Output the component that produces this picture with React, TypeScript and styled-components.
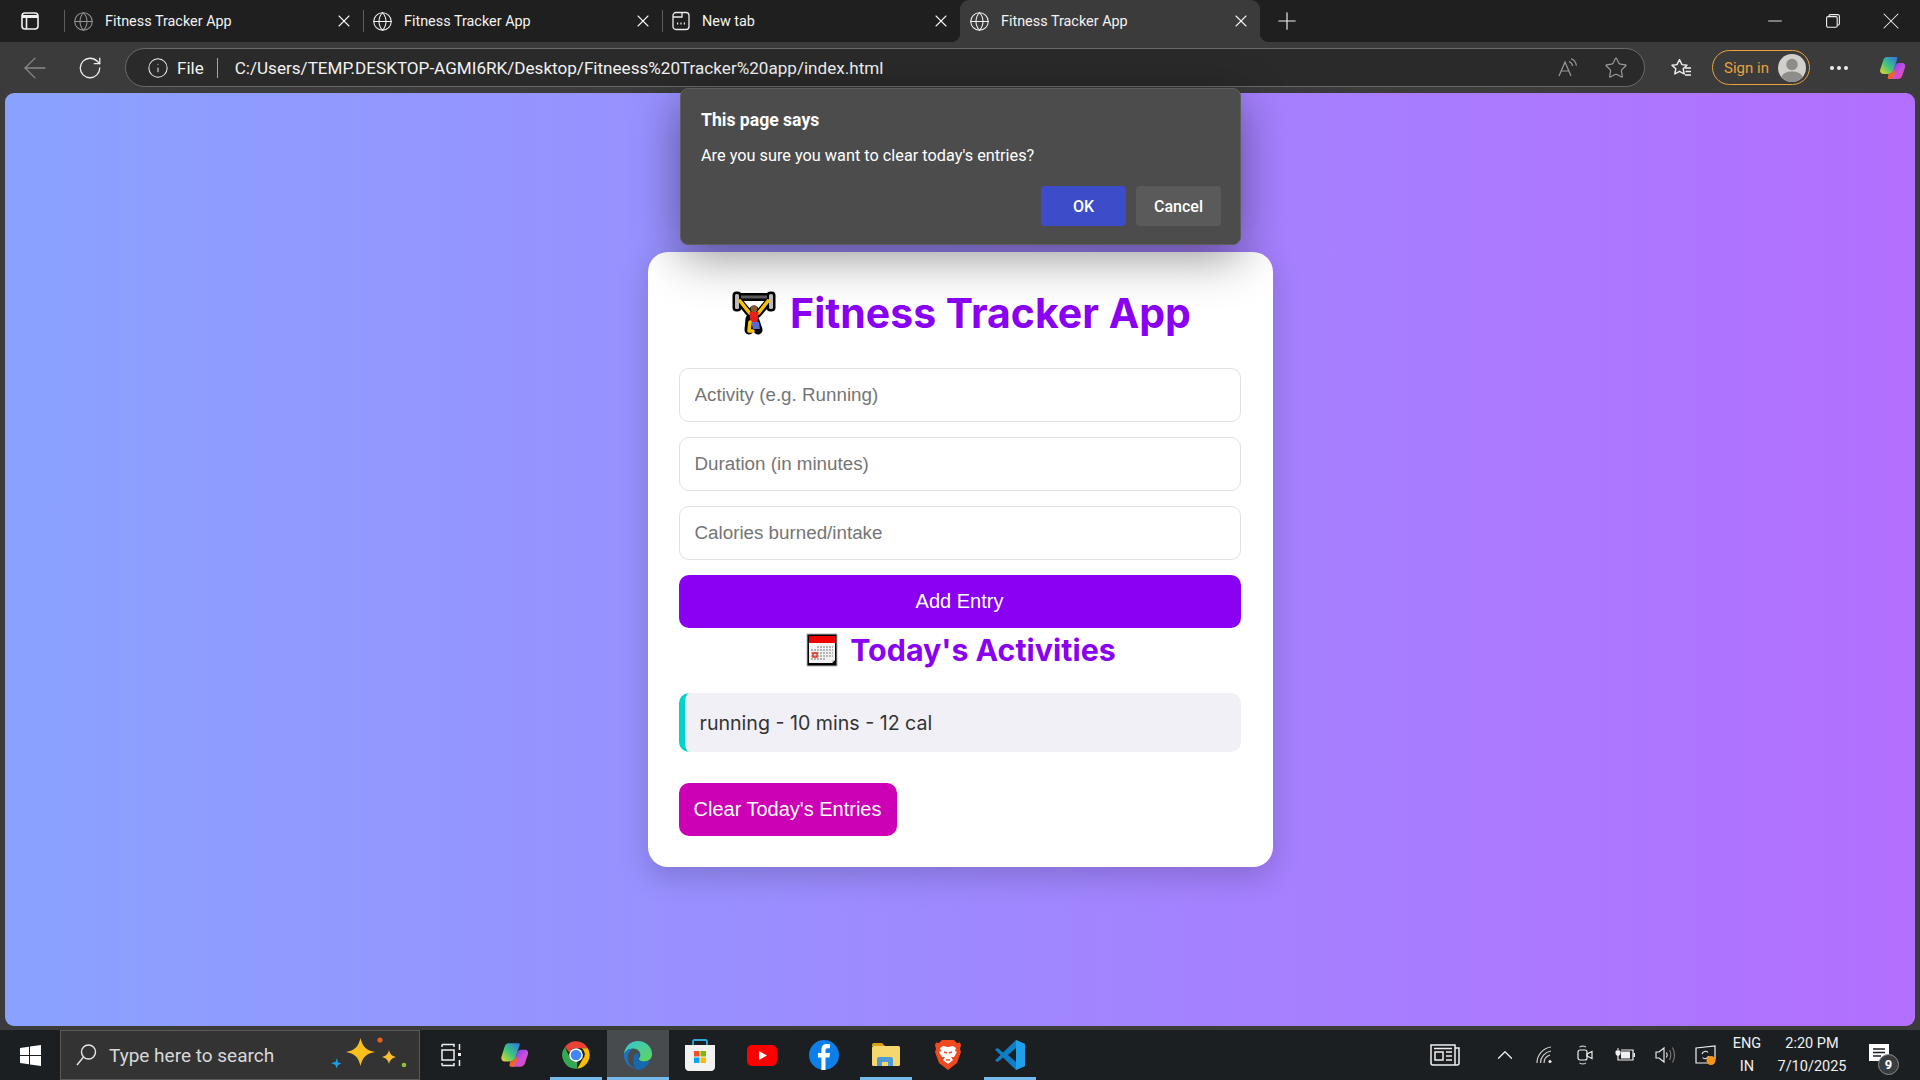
import React from 'react';
import styled, { createGlobalStyle, css } from 'styled-components';
import { ArrowLeft, ChevronUp, Globe, Info, Minus, Plus, RotateCw, Star, X } from 'lucide-react';

const GlobalStyle = createGlobalStyle`
    html, body {
        margin: 0;
        padding: 0;
        height: 100%;
        overflow: hidden;
    }
    #root {
        height: 100%;
    }
    * {
        box-sizing: border-box;
    }
`;

const uiFont = `Roboto, "Open Sans", sans-serif`;
const headingFont = `Inter, "Open Sans", sans-serif`;
const formFont = `"Liberation Sans", Arial, sans-serif`;

const Frame = styled.div`
    position: relative;
    width: 1920px;
    height: 1080px;
    display: flex;
    flex-direction: column;
    background: #3b3b3b;
    font-family: ${uiFont};
    overflow: hidden;
`;

/* tab strip */
const TabStrip = styled.div`
    height: 42px;
    display: flex;
    background: #1f1f1f;
`;

const StripLead = styled.div`
    width: 64px;
    display: flex;
    align-items: center;
    padding-left: 21px;
`;

const activeTabCorners = css`
    &::before,
    &::after {
        content: '';
        position: absolute;
        bottom: 0;
        width: 9px;
        height: 9px;
    }
    &::before {
        left: -9px;
        background: radial-gradient(circle at 0 0, transparent 9px, #3b3b3b 9.5px);
    }
    &::after {
        right: -9px;
        background: radial-gradient(circle at 100% 0, transparent 9px, #3b3b3b 9.5px);
    }
`;

const tabSeparator = css`
    &::before {
        content: '';
        position: absolute;
        left: 0;
        top: 10px;
        bottom: 10px;
        width: 1px;
        background: #5c5c5c;
    }
`;

const Tab = styled.div<{ $active?: boolean; $width?: number }>`
    position: relative;
    width: ${props => props.$width ?? 299}px;
    display: flex;
    align-items: center;
    padding: 0 9px 0 9px;
    gap: 11px;
    color: #f3f3f3;
    background: ${props => (props.$active ? '#3b3b3b' : 'transparent')};
    border-radius: ${props => (props.$active ? '9px 9px 0 0' : '0')};
    ${props => (props.$active ? activeTabCorners : tabSeparator)}
`;

const TabTitle = styled.span`
    flex: 1;
    font-size: 14.4px;
    white-space: nowrap;
`;

const FaviconSlot = styled.span<{ $dim?: boolean }>`
    display: flex;
    opacity: ${props => (props.$dim ? 0.55 : 1)};
`;

const NewTabButton = styled.div`
    width: 54px;
    display: flex;
    align-items: center;
    justify-content: center;
    color: #f0f0f0;
`;

const WindowControls = styled.div`
    margin-left: auto;
    display: flex;
    align-items: center;
    color: #f0f0f0;
`;

const WindowButton = styled.div`
    width: 58px;
    display: flex;
    justify-content: center;
`;

/* toolbar */
const Toolbar = styled.div`
    height: 51px;
    display: flex;
    align-items: center;
    padding: 0 12px 0 13px;
    background: #3b3b3b;
`;

const ToolButton = styled.div<{ $gap?: number; $dim?: boolean }>`
    width: 44px;
    margin-left: ${props => props.$gap ?? 0}px;
    display: flex;
    justify-content: center;
    color: ${props => (props.$dim ? '#8a8a8a' : '#ececec')};
`;

const AddressBar = styled.div`
    width: 1520px;
    height: 39px;
    margin-left: 13px;
    margin-right: 14px;
    padding: 0 16px 0 21px;
    display: flex;
    align-items: center;
    border: 1px solid #6a6a6a;
    border-radius: 20px;
    background: #2a2a2a;
    color: #f2f2f2;
`;

const SchemeLabel = styled.span`
    margin-left: 8px;
    font-size: 17px;
`;

const AddressDivider = styled.span`
    width: 1px;
    height: 20px;
    margin: 0 17px 0 13px;
    background: #a5a5a5;
`;

const UrlText = styled.span`
    flex: 1;
    font-size: 17.1px;
    white-space: nowrap;
`;

const AddressActions = styled.div`
    display: flex;
    align-items: center;
    gap: 26px;
    color: #9a9a9a;
`;

const SignIn = styled.div`
    width: 98px;
    height: 35px;
    margin-left: 9px;
    padding: 0 3px 0 11px;
    display: flex;
    align-items: center;
    justify-content: space-between;
    border: 1.5px solid #e9a23f;
    border-radius: 18px;
    color: #e9a23f;
    font-size: 15px;
`;

const MoreButton = styled.div`
    width: 40px;
    margin-left: 9px;
    display: flex;
    justify-content: center;
    gap: 3px;
`;

const MoreDot = styled.i`
    width: 4px;
    height: 4px;
    border-radius: 50%;
    background: #ececec;
`;

const CopilotSlot = styled.div`
    margin-left: 19px;
    display: flex;
`;

/* page */
const PageArea = styled.main`
    flex: 1;
    margin: 0 5px 4px;
    display: flex;
    align-items: center;
    justify-content: center;
    border-radius: 9px;
    background: linear-gradient(to right, #8aa2ff, #b36fff);
`;

const Card = styled.section`
    width: 625px;
    padding: 31px 32px 31px 31px;
    background: #fff;
    border-radius: 20px;
    box-shadow: 0 10px 30px rgba(0, 0, 0, 0.18);
`;

const Title = styled.h1`
    margin: 0 0 25px;
    height: 60px;
    padding-left: 4px;
    display: flex;
    align-items: center;
    justify-content: center;
    gap: 14px;
    color: #8900f2;
    font-family: ${headingFont};
    font-size: 41px;
    font-weight: 700;
    white-space: nowrap;
`;

const Field = styled.input`
    display: block;
    width: 100%;
    height: 54px;
    margin-bottom: 15px;
    padding: 0 15px;
    border: 1px solid #dde1e6;
    border-radius: 10px;
    background: #fff;
    font-family: ${formFont};
    font-size: 18.8px;
    outline: none;

    &::placeholder {
        color: #757575;
        opacity: 1;
    }
`;

const AddButton = styled.button`
    display: block;
    width: 100%;
    height: 53px;
    border: 0;
    border-radius: 10px;
    background: #8900f2;
    color: #fff;
    font-family: ${formFont};
    font-size: 20px;
`;

const SubTitle = styled.h2`
    margin: 0 0 20px;
    height: 45px;
    padding: 0 0 1px 3px;
    display: flex;
    align-items: center;
    justify-content: center;
    gap: 12px;
    color: #8900f2;
    font-family: ${headingFont};
    font-size: 30.4px;
    font-weight: 700;
    white-space: nowrap;
`;

const EntryList = styled.ul`
    list-style: none;
    margin: 0 0 31px;
    padding: 0;
`;

const EntryItem = styled.li`
    height: 59px;
    display: flex;
    align-items: center;
    padding-left: 15px;
    border-left: 6px solid #00d4c8;
    border-radius: 10px;
    background: #f1f0f7;
    color: #333;
    font-family: ${headingFont};
    font-size: 19.6px;
`;

const ClearButton = styled.button`
    display: block;
    width: 218px;
    height: 53px;
    border: 0;
    border-radius: 10px;
    background: #cc00b4;
    color: #fff;
    font-family: ${formFont};
    font-size: 20px;
    white-space: nowrap;
`;

/* alert */
const Dialog = styled.div`
    position: absolute;
    left: 680px;
    top: 88px;
    width: 561px;
    height: 157px;
    padding: 21px 19px 0 20px;
    display: flex;
    flex-direction: column;
    border: 1px solid #5e5e5e;
    border-radius: 8px;
    background: #4c4c4c;
    color: #fff;
    box-shadow: 0 12px 48px rgba(0, 0, 0, 0.42);
`;

const DialogTitle = styled.div`
    font-size: 17.6px;
    font-weight: 700;
`;

const DialogText = styled.div`
    margin-top: 16px;
    font-size: 16.3px;
`;

const DialogActions = styled.div`
    margin-top: auto;
    margin-bottom: 18px;
    display: flex;
    justify-content: flex-end;
    gap: 10px;
`;

const DialogButton = styled.div<{ $primary?: boolean }>`
    width: 85px;
    height: 40px;
    display: flex;
    align-items: center;
    justify-content: center;
    border-radius: 4px;
    background: ${props => (props.$primary ? '#3d4cc8' : '#5a5a5a')};
    font-size: 16px;
    font-weight: 500;
`;

/* taskbar */
const Taskbar = styled.footer`
    height: 50px;
    display: flex;
    align-items: stretch;
    background: #1b1f22;
    color: #f0f0f0;
`;

const StartButton = styled.div`
    width: 60px;
    display: flex;
    align-items: center;
    justify-content: center;
`;

const SearchBox = styled.div`
    width: 360px;
    margin-right: 1px;
    padding: 0 12px 0 14px;
    display: flex;
    align-items: center;
    gap: 12px;
    border: 1px solid #5a5a5a;
    background: #333;
    font-size: 19px;
    color: #d8d8d8;
`;

const SearchLabel = styled.span`
    flex: 1;
`;

const TaskButton = styled.div<{ $active?: boolean; $open?: boolean }>`
    position: relative;
    width: 62px;
    display: flex;
    align-items: center;
    justify-content: center;
    background: ${props => (props.$active ? '#484b4d' : 'transparent')};

    &::after {
        content: '';
        display: ${props => (props.$open ? 'block' : 'none')};
        position: absolute;
        left: ${props => (props.$active ? 0 : 5)}px;
        right: ${props => (props.$active ? 0 : 5)}px;
        bottom: 0;
        height: 3px;
        background: #76b9ed;
    }
`;

const Tray = styled.div`
    margin-left: auto;
    padding-right: 7px;
    display: flex;
    align-items: center;
`;

const TrayIcon = styled.div<{ $gap?: number }>`
    width: 40px;
    margin-right: ${props => props.$gap ?? 0}px;
    display: flex;
    justify-content: center;
`;

const TrayStack = styled.div<{ $width: number }>`
    width: ${props => props.$width}px;
    padding-top: 1px;
    display: flex;
    flex-direction: column;
    align-items: center;
    gap: 5px;
    font-size: 14.5px;
    line-height: 18px;
`;

const NotifySlot = styled.div`
    position: relative;
    width: 58px;
    padding-right: 10px;
    display: flex;
    justify-content: center;
`;

const NotifyCount = styled.span`
    position: absolute;
    left: 23px;
    top: 10px;
    width: 21px;
    height: 21px;
    display: flex;
    align-items: center;
    justify-content: center;
    border: 1px solid #8b8b8b;
    border-radius: 50%;
    background: #3a3d40;
    color: #fff;
    font-size: 13px;
    font-weight: 700;
`;

/* drawn icons */
const SidebarIcon = () => (
    <svg width="18" height="18" viewBox="0 0 18 18" fill="none" stroke="#f0f0f0" strokeWidth="1.6">
        <rect x="1" y="1" width="16" height="16" rx="3" />
        <path d="M1 4.5h16" strokeWidth="3" />
        <path d="M5.5 5v12" />
    </svg>
);

const NewTabIcon = () => (
    <svg width="20" height="20" viewBox="0 0 20 20" fill="none" stroke="#ececec" strokeWidth="1.3">
        <rect x="2" y="1.5" width="16" height="17" rx="3" />
        <path d="M2 6h9V2" />
        <path d="M6 12.5h1.2M9.4 12.5h1.2M12.8 12.5H14" strokeWidth="1.8" />
    </svg>
);

const RestoreIcon = () => (
    <svg width="14" height="14" viewBox="0 0 14 14" fill="none" stroke="#f0f0f0" strokeWidth="1.1">
        <rect x="0.6" y="2.6" width="10.6" height="10.6" rx="1.5" />
        <path d="M3 2.6V2A1.4 1.4 0 0 1 4.4.6h7.4A1.6 1.6 0 0 1 13.4 2.2v7.4A1.4 1.4 0 0 1 12 11h-.7" />
    </svg>
);

const ReadAloudIcon = () => (
    <svg width="20" height="20" viewBox="0 0 20 20" fill="none" stroke="currentColor" strokeWidth="1.2">
        <path d="M1 18 7 4l6 14M3.2 13h7.6" />
        <path d="M11 3.5c2 .7 3.2 2.2 3.6 4.5M13 .8c3 1 5 3.5 5.4 7" />
    </svg>
);

const FavoritesIcon = () => (
    <svg width="22" height="22" viewBox="0 0 22 22" fill="none" stroke="#f2f2f2" strokeWidth="1.4">
        <path d="M9.5 2.5 12 7.6l5 .6-3.8 3.6 1 5.2-4.7-2.7-4.7 2.7 1-5.2L2 8.2l5-.6z" strokeLinejoin="round" />
        <path d="M15 11h6M15.500 14.500H21M15 18h6" />
    </svg>
);

const AvatarIcon = () => (
    <svg width="28" height="28" viewBox="0 0 28 28">
        <circle cx="14" cy="14" r="14" fill="#d2d0cc" />
        <circle cx="14" cy="10.5" r="5.8" fill="#8f8d8a" />
        <path d="M3.4 23a13.8 13.8 0 0 0 21.2 0c-1.6-4-5.6-5.6-10.6-5.6S5 19 3.4 23z" fill="#8f8d8a" />
    </svg>
);

const CopilotLogo = ({ id, size }: { id: string; size: number }) => (
    <svg width={size} height={size} viewBox="0 0 28 28">
        <defs>
            <linearGradient id={`${id}-a`} x1="0" y1="1" x2="1" y2="0">
                <stop offset="0" stopColor="#f6d32c" />
                <stop offset="0.45" stopColor="#3fc77b" />
                <stop offset="1" stopColor="#2f6ff0" />
            </linearGradient>
            <linearGradient id={`${id}-b`} x1="0" y1="0" x2="1" y2="1">
                <stop offset="0" stopColor="#5b3ff0" />
                <stop offset="0.55" stopColor="#c84fe0" />
                <stop offset="1" stopColor="#f0449a" />
            </linearGradient>
        </defs>
        <path d="M9 3h9c1.200 0 1.700.8 1.300 1.800L15.500 16c-1 3-2.600 4-5 4H5.500C3 20 1.600 18 2.300 15.600L5 7c.7-2.600 2-4 4-4z" fill={`url(#${id}-a)`} />
        <path d="M12.500 25h7c3 0 4.300-1.600 5-4l2.500-7.800C27.800 11 26.500 9 24 9h-3.500c-1.800 0-3 .9-3.600 2.800L13.500 22c-.4 1.200-1 2-2 3z" fill={`url(#${id}-b)`} />
        <path d="M10.500 20c2.500 0 3.800-1.200 4.500-3l.8-2.200 1.500 3.500c.5 1.200-.2 2-1 3L14 25h-3c-1 0-1.600-.8-1.200-1.800z" fill="#f2622e" />
    </svg>
);

const LifterEmoji = () => (
    <svg width="44" height="44" viewBox="0 0 44 44" strokeLinecap="round" strokeLinejoin="round" fill="none">
        {/* black outline */}
        <rect x="0.500" y="0.500" width="9" height="20" rx="4" fill="#000" />
        <rect x="34.500" y="0.500" width="9" height="20" rx="4" fill="#000" />
        <path d="M8 6h28" stroke="#000" strokeWidth="8" />
        <path d="M7 10l11 13M37 10 26 23" stroke="#000" strokeWidth="7" />
        <path d="M22 19v10M18 28l-1 11M23 30l3 9" stroke="#000" strokeWidth="9" />
        {/* bar and plates */}
        <path d="M9 6h26" stroke="#5c5c5c" strokeWidth="3" strokeLinecap="butt" />
        <rect x="3" y="3" width="4" height="15" rx="1.500" fill="#bdbdbd" />
        <rect x="37" y="3" width="4" height="15" rx="1.500" fill="#bdbdbd" />
        {/* arms */}
        <path d="M8 10l9.500 12M36 10 26.500 22" stroke="#f6c40c" strokeWidth="3.600" />
        <circle cx="22" cy="18" r="3.400" fill="#8a5a33" />
        {/* torso, shorts, legs */}
        <path d="M17.500 21h9l-1 11h-7z" fill="#e8201c" />
        <path d="M19 31h8l1 7h-7z" fill="#5a6ad0" />
        <path d="M18 31l-1 9h4" stroke="#f6c40c" strokeWidth="3.600" />
    </svg>
);

const CalendarEmoji = () => (
    <svg width="32" height="34" viewBox="0 0 32 34">
        <rect x="0.500" y="0.500" width="31" height="33" fill="#b8b8b8" />
        <rect x="1.500" y="1.500" width="29" height="31" fill="#000" />
        <rect x="3" y="3" width="26" height="7" fill="#ee0000" />
        <path d="M3 10h26v17l-3 3H3z" fill="#f2f2f2" />
        <path d="M26 30l3-3h-3z" fill="#c9c9c9" />
        <path d="M11 14h16M5 17h22M5 20h22M5 23h22M5 26h14" stroke="#b4b4b4" strokeWidth="1.800" strokeDasharray="2 1" />
        <rect x="7" y="20" width="4" height="4" fill="none" stroke="#e8301c" strokeWidth="1.500" />
    </svg>
);

const WindowsLogo = () => (
    <svg width="21" height="21" viewBox="0 0 21 21" fill="#fff">
        <path d="M0 3l9-1.300V10H0zM10 1.500 21 0v10H10zM0 11h9v8.300L0 18zM10 11h11v10l-11-1.500z" />
    </svg>
);

const SearchGlyph = () => (
    <svg width="22" height="24" viewBox="0 0 22 24" fill="none" stroke="#e6e6e6" strokeWidth="1.400">
        <circle cx="13.500" cy="9" r="7" />
        <path d="M8.500 14 2 22" />
    </svg>
);

const Sparkles = () => (
    <svg width="76" height="42" viewBox="0 0 76 42">
        <path d="M29.500 4c2 9 6 12.500 14.500 14-8.500 1.500-12.500 5-14.500 14-2-9-6-12.500-14.500-14 8.500-1.500 12.500-5 14.500-14z" fill="#fbbf1c" />
        <path d="M58 16c1 4 3 6 7 7-4 1-6 3-7 7-1-4-3-6-7-7 4-1 6-3 7-7z" fill="#f9c02e" />
        <circle cx="49" cy="6" r="2.600" fill="#e8601c" />
        <circle cx="73" cy="31" r="2.300" fill="#8cc13a" />
        <path d="M6 24l1 4.500 3.500 1-3.500 1.500-1.500 3.500-1-3.500L0 29l4.500-1z" fill="#1d9fe8" />
    </svg>
);

const TaskViewIcon = () => (
    <svg width="22" height="24" viewBox="0 0 22 24" fill="none" stroke="#f0f0f0" strokeWidth="1.500">
        <rect x="1" y="7" width="12" height="10" />
        <path d="M1 1.500h12V4M1 4V1.500M1 22.500h12V20M1 20v2.500M18.500 1v6M18.500 17v6" />
        <rect x="17" y="10" width="3" height="3" fill="#f0f0f0" stroke="none" />
    </svg>
);

const ChromeLogo = () => (
    <svg width="30" height="30" viewBox="0 0 48 48">
        <path d="M24 2a22 22 0 0 1 19 11H24a11 11 0 0 0-10.500 7.500L6.200 11A22 22 0 0 1 24 2z" fill="#ea4335" />
        <path d="M43 13a22 22 0 0 1-17 32.900L35 30a11 11 0 0 0-2-17z" fill="#fbbc05" />
        <path d="M26 45.900A22 22 0 0 1 6.200 11l8.800 19a11 11 0 0 0 11 4.800z" fill="#34a853" />
        <circle cx="24" cy="24" r="11" fill="#fff" />
        <circle cx="24" cy="24" r="8.500" fill="#4285f4" />
    </svg>
);

const EdgeLogo = () => (
    <svg width="30" height="32" viewBox="0 0 32 32">
        <defs>
            <linearGradient id="edge-a" x1="0" y1="0" x2="1" y2="1">
                <stop offset="0" stopColor="#33c6d6" />
                <stop offset="1" stopColor="#5fd65a" />
            </linearGradient>
        </defs>
        <path d="M16 1c8 0 15 6 15 14 0 5-4 8-8 8-3 0-6-1-6-3 0-1 1.500-1.500 1.500-4C18.500 12 15 9 11 9 6 9 2 12 1 16 1.500 7 8 1 16 1z" fill="url(#edge-a)" />
        <path d="M1 16c1-4 5-7 10-7-4 2-6 6-6 10 0 5 3 10 9 12C7 30 1 24 1 16z" fill="#1c72c4" />
        <path d="M11 20c0-3 2-6 5-6 1 1 1 2 1 3-1 2-1 3 1 5 2 1.500 7 2 11-1-2 6-7 11-14 11-3-1-4-8-4-12z" fill="#1668b0" />
    </svg>
);

const StoreLogo = () => (
    <svg width="30" height="32" viewBox="0 0 30 32">
        <path d="M8 6V2.500C8 1.500 8.500 1 9.500 1h11c1 0 1.500.5 1.500 1.500V6" fill="none" stroke="#2aa8e0" strokeWidth="1.800" />
        <path d="M0 6h30v22c0 2-1.500 4-4 4H4c-2.500 0-4-2-4-4z" fill="#f2f2f2" />
        <rect x="9" y="12" width="5.500" height="5.500" fill="#f25022" />
        <rect x="15.500" y="12" width="5.500" height="5.500" fill="#7fba00" />
        <rect x="9" y="18.500" width="5.500" height="5.500" fill="#00a4ef" />
        <rect x="15.500" y="18.500" width="5.500" height="5.500" fill="#ffb900" />
    </svg>
);

const YouTubeLogo = () => (
    <svg width="30" height="21" viewBox="0 0 30 21">
        <rect width="30" height="21" rx="5" fill="#f00" />
        <path d="M12 6l8 4.500-8 4.500z" fill="#fff" />
    </svg>
);

const FacebookLogo = () => (
    <svg width="30" height="30" viewBox="0 0 30 30">
        <circle cx="15" cy="15" r="15" fill="#0c7fe8" />
        <path d="M16.500 30V17.500h4l.6-4.500h-4.600v-2.600c0-1.400.5-2.200 2.200-2.200H21V4.300c-.7-.1-1.900-.3-3.100-.3-3.400 0-5.500 2-5.500 5.800V13H9v4.500h3.400V30z" fill="#fff" />
    </svg>
);

const FolderLogo = () => (
    <svg width="28" height="24" viewBox="0 0 28 24">
        <path d="M0 2c0-1 .5-2 2-2h8l3 3H0z" fill="#d9a216" />
        <rect y="3" width="28" height="20" rx="1.500" fill="#f6d76d" />
        <path d="M5 23v-7c0-1 .8-2 2-2h12c1.200 0 2 1 2 2v7h-5v-4H10v4z" fill="#4d9ad6" />
    </svg>
);

const BraveLogo = () => (
    <svg width="26" height="30" viewBox="0 0 26 30">
        <path d="M7 0h12l3 3 3-.5L26 5l-1 4 1 3-4 11-9 7-9-7L0 12l1-3-1-4 1-2.500L4 3z" fill="#f1491f" />
        <path d="M13 7c-2 0-3-1-5-1L5 8l1 3-2 1 3 5 3 0-2 3 5 4 5-4-2-3 3 0 3-5-2-1 1-3-3-2c-2 0-3 1-5 1z" fill="#fff" />
        <path d="M9 12l3 1M17 12l-3 1M11 20h4" stroke="#f1491f" strokeWidth="1.500" />
    </svg>
);

const VsCodeLogo = () => (
    <svg width="30" height="30" viewBox="0 0 30 30">
        <path d="M21 0l9 4v22l-9 4L8 17.500 2.500 22 0 20.500 5.500 15 0 9.500 2.500 8 8 12.500z" fill="#0e7fc7" />
        <path d="M21 0l9 4v22l-9 4z" fill="#20a0ea" />
        <path d="M21 8l-8 7 8 7z" fill="#1b1f22" />
    </svg>
);

const NewsIcon = () => (
    <svg width="30" height="22" viewBox="0 0 30 22" fill="none" stroke="#f0f0f0" strokeWidth="1.500">
        <path d="M1 1h24v20H3a2 2 0 0 1-2-2zM25 4h4v15a2 2 0 0 1-2 2h-2" />
        <rect x="5" y="8" width="8" height="8" />
        <path d="M4 4.500h18M16 8h6M16 12h6M16 16h6" />
    </svg>
);

const WifiIcon = () => (
    <svg width="18" height="18" viewBox="0 0 18 18" fill="none" stroke="#cfcfcf" strokeWidth="1.200">
        <path d="M1 17C1 9 7 2 15 1M4.500 17C4.500 11 9 6 15 5M8 17c0-4 3-7 6-8" />
        <circle cx="14" cy="15.500" r="1.500" fill="#f0f0f0" stroke="none" />
    </svg>
);

const CameraIcon = () => (
    <svg width="16" height="20" viewBox="0 0 16 20" fill="none" stroke="#f0f0f0" strokeWidth="1.200">
        <rect x="1" y="5" width="9" height="10" rx="2" />
        <path d="M10 9l5-2.500v7L10 11z" />
        <path d="M2.500 2c2-1.200 4.500-1.200 6.500 0M2.500 18c2 1.200 4.500 1.200 6.500 0" stroke="#c0c0c0" />
    </svg>
);

const BatteryIcon = () => (
    <svg width="20" height="14" viewBox="0 0 20 14">
        <path d="M3 0v3M1 3h4v2.500a2 2 0 0 1-4 0z" stroke="#f0f0f0" strokeWidth="1" fill="#f0f0f0" />
        <path d="M3 8v4h15V2H6" fill="none" stroke="#f0f0f0" strokeWidth="1.200" />
        <rect x="6" y="3.500" width="9" height="7" fill="#f0f0f0" />
        <rect x="18.500" y="5" width="1.500" height="4" fill="#f0f0f0" />
    </svg>
);

const VolumeIcon = () => (
    <svg width="21" height="18" viewBox="0 0 21 18" fill="none" stroke="#f0f0f0" strokeWidth="1.100">
        <path d="M1 6h3l5-4v14l-5-4H1z" />
        <path d="M11.500 6.500c.9 1.500.9 3.500 0 5" />
        <path d="M14.500 4c1.600 3 1.600 7 0 10M17.500 1.500c2.400 4.500 2.400 10.500 0 15" stroke="#7a7a7a" />
    </svg>
);

const SyncIcon = () => (
    <svg width="21" height="20" viewBox="0 0 21 20">
        <path d="M1 3l19-2v13L13 18l-12 0z" fill="none" stroke="#f0f0f0" strokeWidth="1.200" />
        <path d="M7 9a3.500 3.500 0 0 1 6-1.500M13.500 11a3.500 3.500 0 0 1-6 1.500" fill="none" stroke="#f0f0f0" strokeWidth="1.100" />
        <circle cx="16" cy="15.500" r="4.500" fill="#f7941d" />
    </svg>
);

const NotifyIcon = () => (
    <svg width="20" height="22" viewBox="0 0 20 22">
        <path d="M0 0h20v17H0z" fill="#fff" />
        <path d="M4 5h12M4 8.500h12M4 12h8" stroke="#1b1f22" strokeWidth="1.300" />
    </svg>
);

const tabs = [
    { title: 'Fitness Tracker App', dim: true },
    { title: 'Fitness Tracker App' },
    { title: 'New tab', blank: true, width: 298 },
    { title: 'Fitness Tracker App', active: true, width: 300 },
];

const App = () => {
    return (
        <Frame>
            <GlobalStyle />
            <TabStrip>
                <StripLead>
                    <SidebarIcon />
                </StripLead>
                {tabs.map((tab, index) => (
                    <Tab key={index} $active={tab.active} $width={tab.width}>
                        <FaviconSlot $dim={tab.dim}>
                            {tab.blank ? <NewTabIcon /> : <Globe size={21} strokeWidth={1.2} />}
                        </FaviconSlot>
                        <TabTitle>{tab.title}</TabTitle>
                        <X size={20} strokeWidth={1.3} />
                    </Tab>
                ))}
                <NewTabButton>
                    <Plus size={28} strokeWidth={1} />
                </NewTabButton>
                <WindowControls>
                    <WindowButton>
                        <Minus size={22} strokeWidth={1} />
                    </WindowButton>
                    <WindowButton>
                        <RestoreIcon />
                    </WindowButton>
                    <WindowButton>
                        <X size={28} strokeWidth={0.9} />
                    </WindowButton>
                </WindowControls>
            </TabStrip>

            <Toolbar>
                <ToolButton $dim>
                    <ArrowLeft size={34} strokeWidth={0.9} />
                </ToolButton>
                <ToolButton $gap={11}>
                    <RotateCw size={26} strokeWidth={1.2} />
                </ToolButton>
                <AddressBar>
                    <Info size={22} strokeWidth={1.1} />
                    <SchemeLabel>File</SchemeLabel>
                    <AddressDivider />
                    <UrlText>C:/Users/TEMP.DESKTOP-AGMI6RK/Desktop/Fitneess%20Tracker%20app/index.html</UrlText>
                    <AddressActions>
                        <ReadAloudIcon />
                        <Star size={24} strokeWidth={1.2} />
                    </AddressActions>
                </AddressBar>
                <ToolButton>
                    <FavoritesIcon />
                </ToolButton>
                <SignIn>
                    Sign in
                    <AvatarIcon />
                </SignIn>
                <MoreButton>
                    <MoreDot />
                    <MoreDot />
                    <MoreDot />
                </MoreButton>
                <CopilotSlot>
                    <CopilotLogo id="copilot-top" size={28} />
                </CopilotSlot>
            </Toolbar>

            <PageArea>
                <Card>
                    <Title>
                        <LifterEmoji />
                        Fitness Tracker App
                    </Title>
                    <Field placeholder="Activity (e.g. Running)" />
                    <Field placeholder="Duration (in minutes)" />
                    <Field placeholder="Calories burned/intake" />
                    <AddButton>Add Entry</AddButton>
                    <SubTitle>
                        <CalendarEmoji />
                        Today's Activities
                    </SubTitle>
                    <EntryList>
                        <EntryItem>running - 10 mins - 12 cal</EntryItem>
                    </EntryList>
                    <ClearButton>Clear Today's Entries</ClearButton>
                </Card>
            </PageArea>

            <Taskbar>
                <StartButton>
                    <WindowsLogo />
                </StartButton>
                <SearchBox>
                    <SearchGlyph />
                    <SearchLabel>Type here to search</SearchLabel>
                    <Sparkles />
                </SearchBox>
                <TaskButton>
                    <TaskViewIcon />
                </TaskButton>
                <TaskButton>
                    <CopilotLogo id="copilot-bar" size={30} />
                </TaskButton>
                <TaskButton $open>
                    <ChromeLogo />
                </TaskButton>
                <TaskButton $active $open>
                    <EdgeLogo />
                </TaskButton>
                <TaskButton>
                    <StoreLogo />
                </TaskButton>
                <TaskButton>
                    <YouTubeLogo />
                </TaskButton>
                <TaskButton>
                    <FacebookLogo />
                </TaskButton>
                <TaskButton $open>
                    <FolderLogo />
                </TaskButton>
                <TaskButton>
                    <BraveLogo />
                </TaskButton>
                <TaskButton $open>
                    <VsCodeLogo />
                </TaskButton>
                <Tray>
                    <TrayIcon $gap={20}>
                        <NewsIcon />
                    </TrayIcon>
                    <TrayIcon>
                        <ChevronUp size={26} strokeWidth={1.2} />
                    </TrayIcon>
                    <TrayIcon>
                        <WifiIcon />
                    </TrayIcon>
                    <TrayIcon>
                        <CameraIcon />
                    </TrayIcon>
                    <TrayIcon>
                        <BatteryIcon />
                    </TrayIcon>
                    <TrayIcon>
                        <VolumeIcon />
                    </TrayIcon>
                    <TrayIcon>
                        <SyncIcon />
                    </TrayIcon>
                    <TrayStack $width={44}>
                        <span>ENG</span>
                        <span>IN</span>
                    </TrayStack>
                    <TrayStack $width={86}>
                        <span>2:20 PM</span>
                        <span>7/10/2025</span>
                    </TrayStack>
                    <NotifySlot>
                        <NotifyIcon />
                        <NotifyCount>9</NotifyCount>
                    </NotifySlot>
                </Tray>
            </Taskbar>

            <Dialog>
                <DialogTitle>This page says</DialogTitle>
                <DialogText>Are you sure you want to clear today's entries?</DialogText>
                <DialogActions>
                    <DialogButton $primary>OK</DialogButton>
                    <DialogButton>Cancel</DialogButton>
                </DialogActions>
            </Dialog>
        </Frame>
    );
};

export default App;
